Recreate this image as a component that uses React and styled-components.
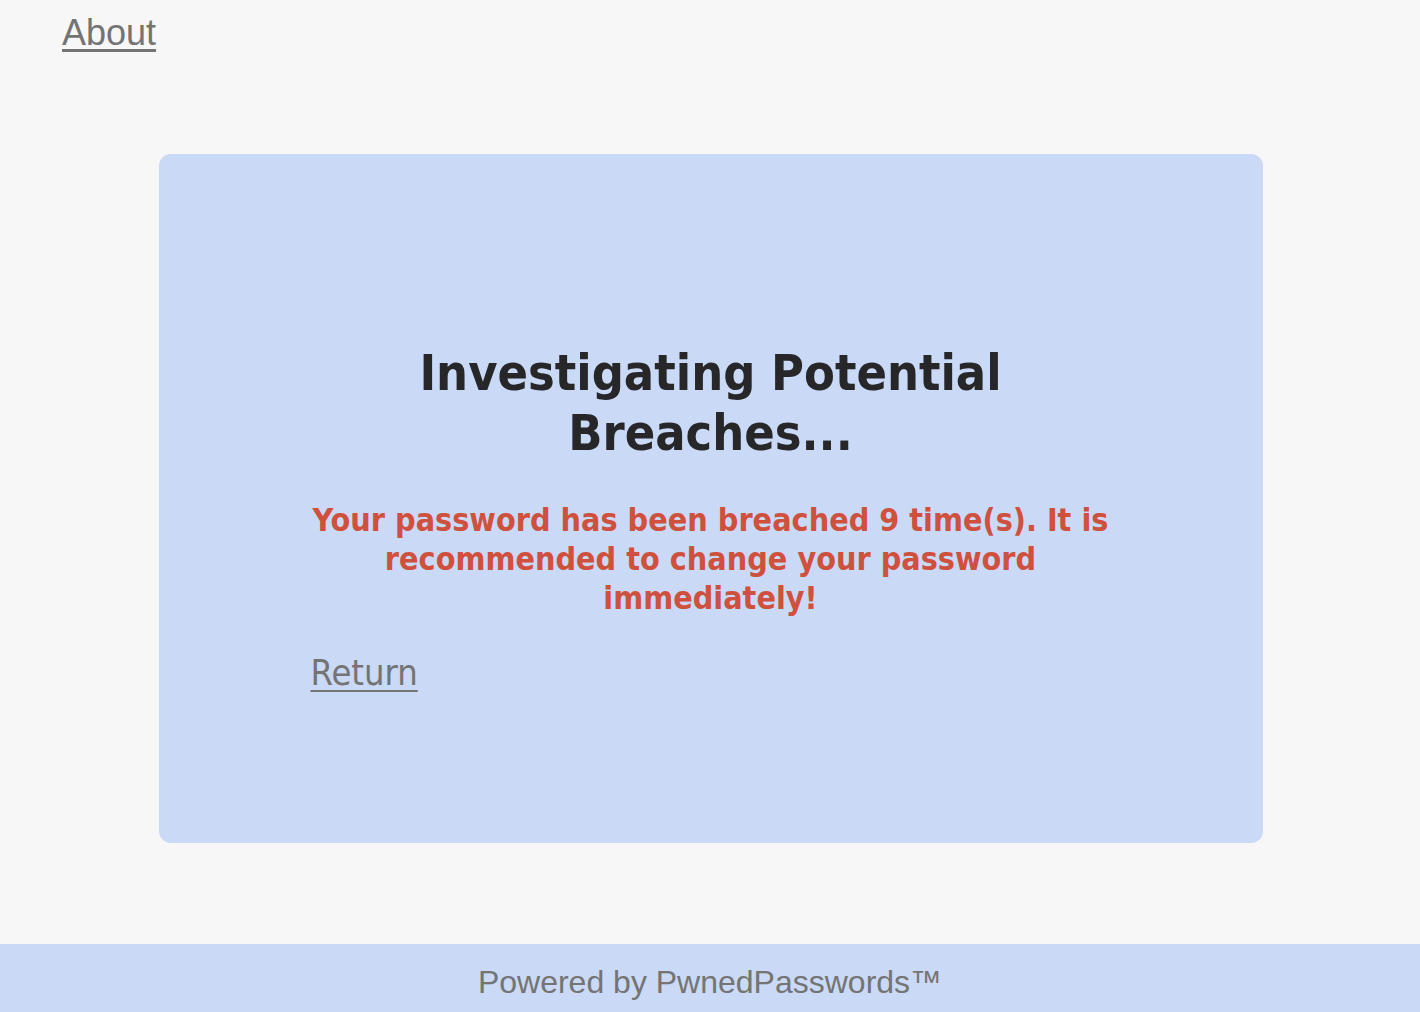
import React from "react";
import styled, { createGlobalStyle } from "styled-components";

const GlobalStyle = createGlobalStyle`
  html, body {
    margin: 0;
    padding: 0;
    background: #f7f7f7;
  }
  body {
    font-family: "Liberation Sans", Arial, sans-serif;
  }
`;

const Page = styled.div`
  min-height: 1012px;
  display: flex;
  flex-direction: column;
`;

const Nav = styled.nav`
  padding: 12px 62px 0;
  height: 142px;
  box-sizing: border-box;
`;

const NavLink = styled.a`
  font-family: "Liberation Sans", Arial, sans-serif;
  font-size: 36px;
  color: #747474;
  text-decoration: underline;
  text-underline-offset: 4px;
  text-decoration-thickness: 3px;
`;

const Main = styled.main`
  flex: 1;
  display: flex;
  justify-content: center;
  padding-left: 1px;
`;

const Card = styled.section`
  width: 1104px;
  height: 689px;
  margin-top: 12px;
  background: #c9d9f6;
  border-radius: 12px;
  display: flex;
  flex-direction: column;
  align-items: center;
  justify-content: center;
  padding-top: 38px;
  box-sizing: border-box;
`;

const Content = styled.div`
  width: 800px;
  display: flex;
  flex-direction: column;
  align-items: center;
`;

const Title = styled.h1`
  margin: 0 0 38px;
  max-width: 620px;
  text-align: center;
  font-family: "DejaVu Sans Condensed", "DejaVu Sans", sans-serif;
  font-weight: bold;
  font-size: 50px;
  line-height: 60px;
  color: #27272a;
`;

const Alert = styled.p`
  margin: 0 0 34px;
  text-align: center;
  font-family: "DejaVu Sans Condensed", "DejaVu Sans", sans-serif;
  font-weight: bold;
  font-size: 32px;
  line-height: 39px;
  color: #d0503e;
`;

const ReturnLink = styled.a`
  align-self: flex-start;
  font-family: "DejaVu Sans Condensed", "DejaVu Sans", sans-serif;
  font-size: 36px;
  color: #747474;
  text-decoration: underline;
  text-underline-offset: 5px;
  text-decoration-thickness: 2px;
`;

const Footer = styled.footer`
  height: 68px;
  margin-top: 100px;
  background: #c9d9f6;
  display: flex;
  align-items: center;
  justify-content: center;
  font-family: "Liberation Sans", Arial, sans-serif;
  font-size: 32px;
  color: #747474;
  padding-top: 8px;
  box-sizing: border-box;
`;

export default function App() {
  return (
    <Page>
      <GlobalStyle />
      <Nav>
        <NavLink href="#about">About</NavLink>
      </Nav>
      <Main>
        <Card>
          <Content>
            <Title>Investigating Potential Breaches...</Title>
            <Alert>
              Your password has been breached 9 time(s). It is recommended to
              change your password immediately!
            </Alert>
            <ReturnLink href="#return">Return</ReturnLink>
          </Content>
        </Card>
      </Main>
      <Footer>Powered by PwnedPasswords™</Footer>
    </Page>
  );
}
